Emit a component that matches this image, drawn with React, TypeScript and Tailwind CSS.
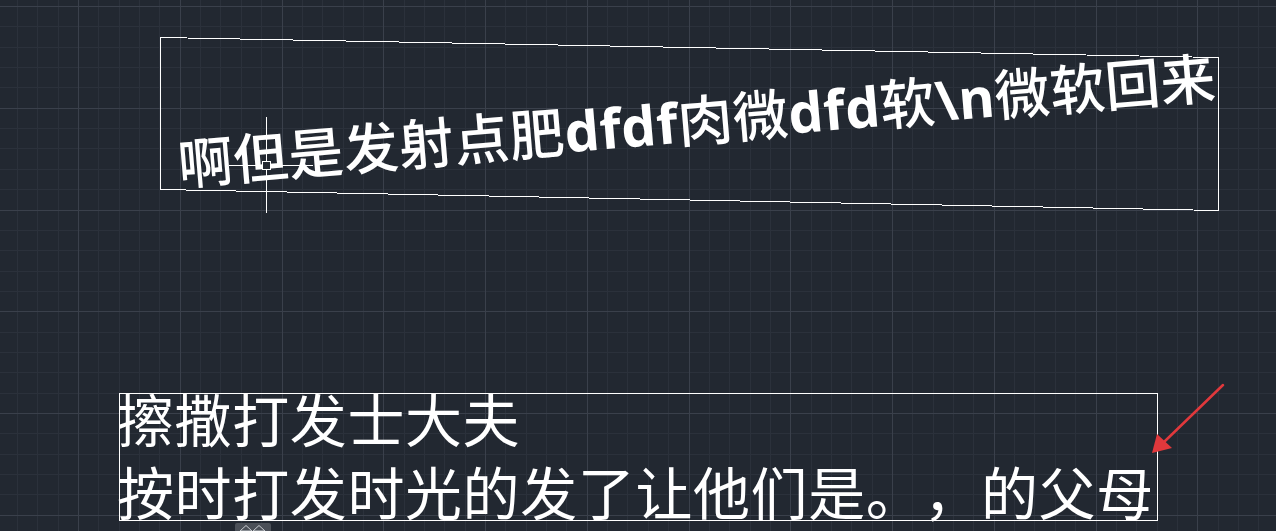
import React from "react";

const W = 1276;
const H = 531;
const STEP = 20.35;

function Grid() {
  const v: { x: number; major: boolean }[] = [];
  for (let i = -4; 78 + i * STEP < W + 1; i++) {
    v.push({ x: Math.round(78 + i * STEP) + 0.5, major: ((i % 5) + 5) % 5 === 0 });
  }
  const h: { y: number; major: boolean }[] = [];
  for (let i = 0; 6 + i * STEP < H + 1; i++) {
    h.push({ y: Math.round(6 + i * STEP) + 0.5, major: i % 5 === 0 });
  }
  return (
    <g shapeRendering="crispEdges">
      {v.filter((l) => !l.major).map((l) => (
        <line key={"vm" + l.x} x1={l.x} y1={0} x2={l.x} y2={H} stroke="#2b313b" strokeWidth={1} />
      ))}
      {h.filter((l) => !l.major).map((l) => (
        <line key={"hm" + l.y} x1={0} y1={l.y} x2={W} y2={l.y} stroke="#2b313b" strokeWidth={1} />
      ))}
      {v.filter((l) => l.major).map((l) => (
        <line key={"vM" + l.x} x1={l.x} y1={0} x2={l.x} y2={H} stroke="#3a404b" strokeWidth={1} />
      ))}
      {h.filter((l) => l.major).map((l) => (
        <line key={"hM" + l.y} x1={0} y1={l.y} x2={W} y2={l.y} stroke="#3a404b" strokeWidth={1} />
      ))}
    </g>
  );
}

export default function App() {
  return (
    <div className="relative w-[1276px] h-[531px] overflow-hidden bg-[#222831]">
      <svg className="absolute inset-0" width={W} height={H} viewBox={`0 0 ${W} ${H}`}>
        <Grid />
        <polygon
          points="160.5,37.5 1218.5,57.5 1218.5,210.5 160.5,189.5"
          fill="none"
          stroke="#ffffff"
          strokeWidth={1}
          shapeRendering="crispEdges"
        />
        <rect x={119.5} y={393.5} width={1038} height={127} fill="none" stroke="#ffffff" strokeWidth={1} shapeRendering="crispEdges" />
      </svg>

      {/* rotated mtext */}
      <div className="absolute left-[178px] top-[134px] whitespace-nowrap text-white text-[55px] leading-[55px] tracking-[0.4px] font-medium origin-[0_31px] rotate-[-4.8deg] font-['Noto_Sans_CJK_SC',sans-serif]">
        啊但是发射点肥
        <span className="font-bold font-['Open_Sans','Noto_Sans_CJK_SC',sans-serif]">dfdf</span>
        肉微
        <span className="font-bold font-['Open_Sans','Noto_Sans_CJK_SC',sans-serif]">dfd</span>
        软
        <span className="font-bold font-['Open_Sans','Noto_Sans_CJK_SC',sans-serif]">\n</span>
        微软回来
      </div>

      {/* bottom mtext */}
      <div className="absolute left-[117px] top-[381px] flex flex-col whitespace-nowrap text-white text-[57px] leading-[73px] tracking-[0.6px] font-normal [text-spacing-trim:space-all] font-['Noto_Sans_CJK_SC',sans-serif]">
        <div>擦撒打发士大夫</div>
        <div>按时打发时光的发了让他们是。，的父母</div>
      </div>

      <svg className="absolute inset-0 pointer-events-none" width={W} height={H} viewBox={`0 0 ${W} ${H}`}>
        <g shapeRendering="crispEdges" stroke="#ffffff" strokeWidth={1}>
          <line x1={266.5} y1={117} x2={266.5} y2={213} />
          <line x1={229} y1={165.5} x2={313} y2={165.5} />
          <rect x={262.5} y={161.5} width={8} height={8} fill="#222831" />
        </g>
        <line x1={1223} y1={385} x2={1164} y2={442} stroke="#e0383c" strokeWidth={2.5} strokeLinecap="round" />
        <polygon points="1152,453 1157,434 1172,448" fill="#e0383c" />
      </svg>

      <div className="absolute left-[235px] top-[523px] w-[36px] h-[10px] rounded-t-[2px] bg-[#4b5058] flex items-start justify-center pt-[1px]">
        <svg width="30" height="8" viewBox="0 0 30 8">
          <polyline points="2,7 8,1.5 14,7" fill="none" stroke="#c9ccd1" strokeWidth={1} />
          <line x1="2" y1="7" x2="14" y2="7" stroke="#c9ccd1" strokeWidth={1} />
          <polyline points="15,7 21,1.5 27,7" fill="none" stroke="#c9ccd1" strokeWidth={1} />
          <line x1="15" y1="7" x2="27" y2="7" stroke="#c9ccd1" strokeWidth={1} />
        </svg>
      </div>
    </div>
  );
}
